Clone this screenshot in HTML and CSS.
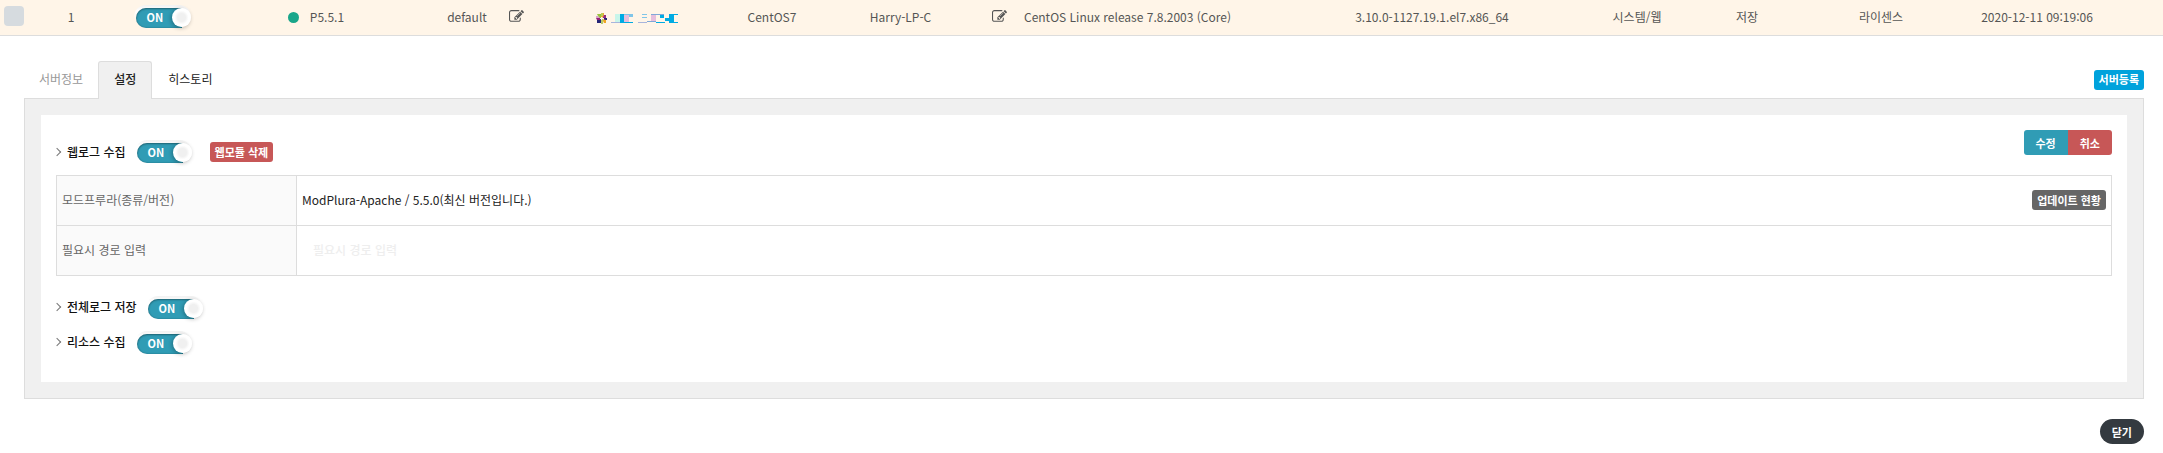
FILE: index.html
```
<!DOCTYPE html>
<html lang="ko">
<head>
<meta charset="utf-8">
<title>서버 설정</title>
<link rel="stylesheet" href="styles.css">
</head>
<body>
<svg class="defs" aria-hidden="true">
  <symbol id="edit" viewBox="0 0 1792 1536">
    <path fill="currentColor" d="M888 1056l116-116-152-152-116 116v56h96v96h56zm440-720q-16-16-33 1L945 687q-17 17-1 33t33-1l350-350q17-17 1-33zm80 594v190q0 119-84.500 203.500T1120 1408H288q-119 0-203.500-84.500T0 1120V288Q0 169 84.500 84.500T288 0h832q63 0 117 25 15 7 18 23 3 17-9 29l-49 49q-14 14-32 8-23-6-45-6H288q-66 0-113 47t-47 113v832q0 66 47 113t113 47h832q66 0 113-47t47-113v-126q0-13 9-22l64-64q15-15 35-7t20 29zm-96-738l288 288-672 672H640V864zm444 132l-92 92-288-288 92-92q28-28 68-28t68 28l152 152q28 28 28 68t-28 68z"/>
  </symbol>
</svg>

<table class="server-list">
  <colgroup>
    <col class="w-check"><col class="w-no"><col class="w-power"><col class="w-version"><col class="w-group"><col class="w-logo"><col class="w-os"><col class="w-host"><col class="w-release"><col class="w-kernel"><col class="w-type"><col class="w-save"><col class="w-license"><col class="w-date">
  </colgroup>
  <tbody>
    <tr>
      <td class="check-cell"><input class="row-check" type="checkbox" aria-label="서버 선택"></td>
      <td>1</td>
      <td><label class="switch"><input type="checkbox" checked aria-label="서버 사용"><span class="track">ON</span><span class="knob"></span></label></td>
      <td><span class="status"><i class="dot"></i>P5.5.1</span></td>
      <td><span class="editable">default<button class="icon-btn" type="button" aria-label="그룹 수정"><svg><use href="#edit"/></svg></button></span></td>
      <td>
        <span class="logo">
          <svg class="centos" viewBox="0 0 11 11">
            <path fill="#9ac43c" d="M1 1h4v4H3z"/><path fill="#d9a2cc" d="M0 3h2l2 2H0z"/>
            <path fill="#eda72f" d="M5 0h3v3L6 5H5z"/><path fill="#b9ce58" d="M5 0h2v3H5z"/>
            <path fill="#922b80" d="M8 2h2v3H7V4z"/><path fill="#262577" d="M8 5h3v2H8z"/>
            <path fill="#efa724" d="M6 6l4 1v3H8z"/><path fill="#262577" d="M1 7l4-1v4H1z"/>
            <path fill="#932279" d="M0 5h4v2H1z"/><path fill="#b5cb70" d="M5 6h2v5H5z"/>
            <path fill="#fff4e6" d="M5 4h1v3H5zM4 5h3v1H4z"/>
          </svg>
          <svg class="masked" viewBox="0 0 67 9">
            <path fill="#c8f5ea" d="M4 0h5v8H4z"/><path fill="#00abe3" d="M9 0h4v4H9zM9 4h4v5H9z"/>
            <path fill="#e6bedd" d="M13 1h5v7h-5z"/><path fill="#80c5e8" d="M13 0h9v1h-9zM18 1h4v2h-4zM31 0h5v1h-5zM31 3h5v1h-5z"/>
            <path fill="#a8b5dc" d="M0 8h9v1H0zM27 8h9v1h-9z"/><path fill="#00abe3" d="M13 8h9v1h-9zM49 1h4v3h-4zM54 4h4v3h-4zM58 0h5v9h-5zM63 0h4v1h-4zM63 8h4v1h-4zM45 8h9v1h-9z"/>
            <path fill="#e6bedd" d="M40 1h5v7h-5z"/><path fill="#80a8d8" d="M40 0h13v1H40zM36 7h9v1h-9z"/>
          </svg>
        </span>
      </td>
      <td>CentOS7</td>
      <td class="host-cell"><span class="editable host">Harry-LP-C<button class="icon-btn" type="button" aria-label="호스트 수정"><svg><use href="#edit"/></svg></button></span></td>
      <td class="left">CentOS Linux release 7.8.2003 (Core)</td>
      <td>3.10.0-1127.19.1.el7.x86_64</td>
      <td>시스템/웹</td>
      <td>저장</td>
      <td>라이센스</td>
      <td class="date-cell">2020-12-11 09:19:06</td>
    </tr>
  </tbody>
</table>

<main class="detail">
  <div class="tab-bar">
    <nav class="tabs">
      <a class="tab muted" href="#info">서버정보</a>
      <a class="tab active" href="#settings" aria-current="page">설정</a>
      <a class="tab" href="#history">히스토리</a>
    </nav>
    <button class="btn small blue" type="button">서버등록</button>
  </div>

  <section class="panel" id="settings">
    <div class="card">
      <div class="card-head">
        <div class="option">
          <h2 class="title" id="weblog">웹로그 수집</h2>
          <label class="switch"><input type="checkbox" checked aria-labelledby="weblog"><span class="track">ON</span><span class="knob"></span></label>
          <button class="btn small red" type="button">웹모듈 삭제</button>
        </div>
        <div class="group">
          <button class="btn teal" type="button">수정</button><button class="btn red" type="button">취소</button>
        </div>
      </div>

      <table class="form">
        <tbody>
          <tr>
            <th scope="row">모드프루라(종류/버전)</th>
            <td><div class="value">ModPlura-Apache / 5.5.0(최신 버전입니다.)<button class="btn small gray" type="button">업데이트 현황</button></div></td>
          </tr>
          <tr>
            <th scope="row"><label for="path">필요시 경로 입력</label></th>
            <td><input class="path" id="path" type="text" placeholder="필요시 경로 입력"></td>
          </tr>
        </tbody>
      </table>

      <div class="options">
        <div class="option">
          <h2 class="title" id="alllog">전체로그 저장</h2>
          <label class="switch"><input type="checkbox" checked aria-labelledby="alllog"><span class="track">ON</span><span class="knob"></span></label>
        </div>
        <div class="option">
          <h2 class="title" id="resource">리소스 수집</h2>
          <label class="switch"><input type="checkbox" checked aria-labelledby="resource"><span class="track">ON</span><span class="knob"></span></label>
        </div>
      </div>
    </div>
  </section>

  <div class="footer">
    <button class="btn close" type="button">닫기</button>
  </div>
</main>
</body>
</html>
```
FILE: styles.css
```
* { box-sizing: border-box; }

body {
  margin: 0;
  background: #fff;
  color: #222;
  font: 12px/18px "Noto Sans CJK KR", "Noto Sans", sans-serif;
}

button, input { font: inherit; }
button { cursor: pointer; }
.defs { display: none; }

/* server row */
.server-list {
  width: 100%;
  table-layout: fixed;
  border-collapse: separate;
  border-spacing: 0;
  color: #555;
}
.server-list td {
  height: 36px;
  padding: 0 0 2px;
  background: #fff5e8;
  border-bottom: 1px solid #ddd;
  text-align: center;
  white-space: nowrap;
}
.w-check { width: 28px; }
.w-no { width: 86px; }
.w-power { width: 96px; }
.w-version { width: 212px; }
.w-group { width: 127px; }
.w-logo { width: 176px; }
.w-os { width: 94px; }
.w-host { width: 205px; }
.w-release { width: 251px; }
.w-kernel { width: 314px; }
.w-type { width: 96px; }
.w-save { width: 124px; }
.w-license { width: 144px; }
.w-date { width: 210px; }
.server-list .left { text-align: left; }
.server-list .host-cell { padding-left: 34px; }
.server-list .date-cell { padding-right: 42px; }
.server-list .check-cell { padding: 0 4px 4px; }

.row-check {
  display: block;
  width: 20px;
  height: 20px;
  margin: 0;
  appearance: none;
  background: #d6dbdf;
  border-radius: 4px;
}
.status, .editable, .logo { display: inline-flex; align-items: center; vertical-align: middle; }
.status { gap: 11px; }
.editable { gap: 22px; }
.host { gap: 61px; }
.logo { gap: 4px; }
.dot { width: 11px; height: 11px; border-radius: 50%; background: #1aa68a; }
.icon-btn { display: block; padding: 0 0 1px; border: 0; background: none; color: #555; }
.icon-btn svg { display: block; width: 15px; height: 13px; }
.centos { width: 11px; height: 11px; }
.masked { width: 67px; height: 9px; }

/* ON/OFF switch */
.switch {
  display: inline-flex;
  align-items: center;
  position: relative;
  width: 57px;
  height: 24px;
  padding: 3px 2px 1px;
  border-radius: 12px;
  background: linear-gradient(#f2f2f2, #fff 25%, transparent 60%);
  vertical-align: middle;
}
.switch input { position: absolute; opacity: 0; inset: 0; margin: 0; }
.track {
  width: 46px;
  height: 20px;
  padding-left: 11px;
  border-radius: 10px 0 0 10px;
  background: #309cb5;
  box-shadow: inset 0 1px 2px rgba(0, 0, 0, .3), inset 0 0 2px rgba(0, 0, 0, .25);
  color: #fff;
  font-size: 11px;
  font-weight: 700;
  line-height: 19px;
  text-align: left;
}
.knob {
  position: absolute;
  top: 3px;
  right: 0;
  width: 19px;
  height: 19px;
  border-radius: 50%;
  background: radial-gradient(circle, #f0f0f0 4px, #fff 7px);
  box-shadow: -1px 1px 4px rgba(0, 0, 0, .3);
}

/* tabs and panel */
.detail { padding: 25px 19px 10px 24px; }
.tab-bar { display: flex; justify-content: space-between; align-items: center; }
.tabs { display: flex; position: relative; margin-bottom: -1px; }
.tab {
  height: 38px;
  padding: 8px 15px;
  border: 1px solid transparent;
  border-bottom: 0;
  border-radius: 3px 3px 0 0;
  color: #222;
  text-decoration: none;
}
.tab.muted { padding: 8px 14px; color: #999; }
.tab.active { background: #f0f0f0; border-color: #ddd; font-weight: 500; }

.panel { padding: 16px; border: 1px solid #ddd; background: #f0f0f0; }
.card { padding: 15px 15px 22px; background: #fff; }
.card-head { display: flex; justify-content: space-between; align-items: flex-start; height: 45px; }
.option { display: flex; align-items: center; height: 35px; }
.card-head .option { padding-top: 9px; }
.title {
  display: flex;
  align-items: center;
  gap: 7px;
  margin: 0 9px 0 0;
  padding-bottom: 1px;
  color: #111;
  font-size: 12px;
  font-weight: 500;
  line-height: 18px;
}
.title::before {
  content: "";
  width: 5px;
  height: 5px;
  margin-left: -2px;
  border: solid #777;
  border-width: 1px 1px 0 0;
  transform: rotate(45deg);
}
.option .btn { margin-left: 18px; }

.form { width: 100%; border-collapse: collapse; }
.form th, .form td { height: 50px; padding: 0 5px 1px; border: 1px solid #ddd; text-align: left; }
.form th { width: 240px; background: #fafafa; color: #666; font-weight: 400; }
.value { display: flex; justify-content: space-between; align-items: center; }
.path {
  display: block;
  width: 100%;
  padding: 0 11px;
  border: 0;
  outline: 0;
  background: none;
}
.path::placeholder { color: #eee; font-weight: 500; opacity: 1; }
.options { padding-top: 14px; }

/* buttons */
.btn {
  height: 25px;
  padding: 0 12px;
  border: 0;
  border-radius: 3px;
  color: #fff;
  font-size: 11px;
  font-weight: 700;
  line-height: 20px;
  white-space: nowrap;
}
.btn.small { height: 20px; padding: 0 5px 1px; line-height: 18px; }
.blue { background: #00a2dc; }
.red { background: #c75757; }
.teal { background: #309cb5; }
.gray { background: #666; }
.group { display: flex; }
.group .btn:first-child { border-radius: 3px 0 0 3px; }
.group .btn:last-child { border-radius: 0 3px 3px 0; }
.footer { display: flex; justify-content: flex-end; padding-top: 20px; }
.close { border-radius: 13px; background: #343a40; }
```
